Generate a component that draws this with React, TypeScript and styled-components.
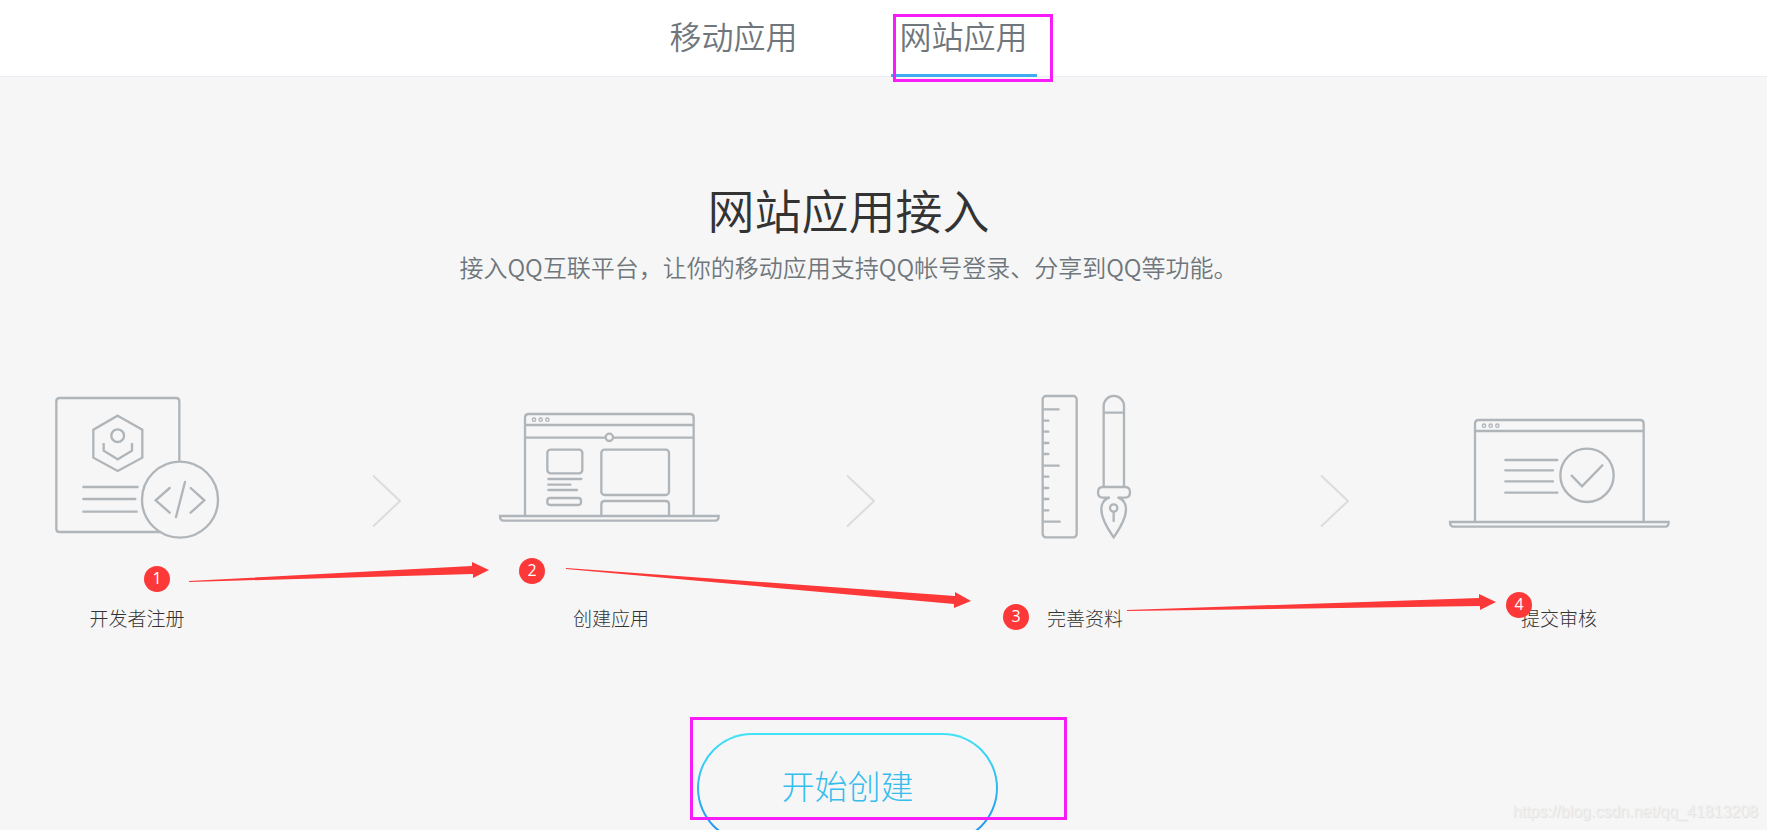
import React from 'react';
import styled, { createGlobalStyle } from 'styled-components';

const GlobalStyle = createGlobalStyle`
  * { box-sizing: border-box; }
  body {
    margin: 0;
    background: #f6f6f6;
    color: #333;
    font-family: "Noto Sans CJK SC", sans-serif;
    font-weight: 300;
  }
`;

const Page = styled.div`
  position: relative;
  height: 100vh;
  overflow: hidden;
`;

const Header = styled.header`
  height: 77px;
  padding-right: 70px;
  background: #fff;
  border-bottom: 1px solid #e8eef3;
`;

const Tabs = styled.nav`
  display: flex;
  justify-content: center;
  gap: 84px;
`;

const Tab = styled.a<{ $active?: boolean }>`
  position: relative;
  width: 146px;
  height: 77px;
  padding-top: 11px;
  border-bottom: 3px solid ${(p) => (p.$active ? '#41aaf0' : 'transparent')};
  color: #6f767c;
  font-size: 32px;
  font-weight: 350;
  line-height: 48px;
  text-align: center;
  text-decoration: none;
`;

const Highlight = styled.span<{ $top: number; $left: number; $width: number; $height: number }>`
  position: absolute;
  top: ${(p) => p.$top}px;
  left: ${(p) => p.$left}px;
  width: ${(p) => p.$width}px;
  height: ${(p) => p.$height}px;
  border: 3px solid #f81cf8;
  pointer-events: none;
`;

const Main = styled.main`
  padding-right: 70px;
`;

const Intro = styled.section`
  padding-top: 97px;
  text-align: center;
`;

const Title = styled.h1`
  margin: 0;
  font-size: 47px;
  font-weight: 350;
  line-height: 70px;
`;

const Subtitle = styled.p`
  margin: 5px 0 0;
  color: #6f767c;
  font-size: 24px;
  font-weight: 350;
  line-height: 36px;
`;

const Steps = styled.ol`
  display: flex;
  justify-content: space-between;
  margin: 109px 0 0;
  padding: 0 26px 0 25px;
  list-style: none;
`;

const Step = styled.li`
  position: relative;
  display: flex;
  flex-direction: column;
  align-items: center;
  gap: 66px;
  width: 224px;
`;

const Separator = styled.li`
  padding-top: 81px;
`;

const StepIcon = styled.svg`
  display: block;
  width: 224px;
  height: 144px;
  overflow: visible;
  fill: none;
  stroke: #b0b5ba;
  stroke-width: 7;
`;

const Chevron = styled.svg`
  display: block;
  fill: none;
  stroke: #dadcde;
  stroke-width: 2;
`;

const StepLabel = styled.span`
  font-size: 19px;
  line-height: 28px;
`;

const Badge = styled.span<{ $top: number; $left: number }>`
  position: absolute;
  top: ${(p) => p.$top}px;
  left: ${(p) => p.$left}px;
  width: 26px;
  height: 26px;
  border-radius: 50%;
  background: #fc3838;
  color: #fff;
  font: 400 16px/24px "Open Sans", sans-serif;
  text-align: center;
`;

const Pointer = styled.svg<{ $top: number; $left: number }>`
  position: absolute;
  top: ${(p) => p.$top}px;
  left: ${(p) => p.$left}px;
  fill: #fc3838;
  pointer-events: none;
`;

const Actions = styled.div`
  display: flex;
  justify-content: center;
  margin-top: 101px;
  padding-right: 2px;
`;

const CreateButton = styled.button`
  position: relative;
  width: 301px;
  height: 110px;
  padding: 0 0 6px;
  border: 2px solid transparent;
  border-radius: 55px;
  background:
    linear-gradient(#f6f6f6, #f6f6f6) padding-box,
    linear-gradient(#3fe4f5, #1f8cf0) border-box;
  color: #35bdee;
  font: inherit;
  font-size: 33px;
  line-height: 48px;
`;

const Watermark = styled.span`
  position: absolute;
  right: 9px;
  bottom: 8px;
  color: #f0f0f0;
  font: 400 16px/20px "Liberation Sans", sans-serif;
  text-shadow: 1px 1px 1px #dedede;
`;

const RegisterIcon = () => (
  <StepIcon viewBox="-45 42 672 432" aria-hidden="true">
    <path d="M418 244V64Q418 54 408 54H59Q49 54 49 64V446Q49 456 59 456H362" />
    <path d="M233 107 307 149V233L233 273 160 233V149Z" />
    <circle cx="233" cy="167" r="19" />
    <path d="M191 189V212L233 238 276 212V189" />
    <path d="M130 321H293M130 357H286M130 395H290" strokeLinecap="round" />
    <circle cx="420" cy="359" r="114" />
    <path d="M389 324 347 361 389 398M452 324 493 361 452 398M435 306 408 411" strokeLinecap="round" />
  </StepIcon>
);

const LaptopFrame = () => (
  <>
    <path d="M525 377V83Q525 72 536 72H1020Q1031 72 1031 83V377M525 105H1031" />
    <g strokeWidth="4">
      <circle cx="552" cy="89" r="5" />
      <circle cx="572" cy="89" r="5" />
      <circle cx="592" cy="89" r="5" />
    </g>
    <path d="M450 378H1106Q1106 392 1096 392H461Q450 392 450 378Z" />
  </>
);

const CreateIcon = () => (
  <StepIcon viewBox="447 12 672 432" aria-hidden="true">
    <LaptopFrame />
    <path d="M525 143H767M789 143H1031" />
    <circle cx="778" cy="142" r="11" />
    <rect x="592" y="179" width="105" height="71" rx="10" />
    <path d="M595 267H694M595 284H661M595 300H681" strokeLinecap="round" />
    <rect x="592" y="324" width="101" height="21" rx="8" />
    <rect x="754" y="179" width="203" height="136" rx="10" />
    <path d="M754 378V343Q754 333 764 333H947Q957 333 957 343V378" />
  </StepIcon>
);

const DetailsIcon = () => (
  <StepIcon viewBox="429 42 672 432" aria-hidden="true">
    <rect x="638" y="48" width="102" height="424" rx="10" />
    <path
      d="M640 88H686M640 122H655M640 155H655M640 189H655M640 222H655M640 257H686M640 290H655M640 324H655M640 357H655M640 391H655M640 425H689"
      strokeLinecap="round"
    />
    <path d="M821 320V78A30.500 30.500 0 0 1 882 78V320M821 98H882" />
    <path d="M837 353H818Q804 353 804 337 804 321 818 321H886Q900 321 900 337 900 353 886 353H865" strokeLinecap="round" />
    <path d="M837 353Q814 362 814 388 814 420 851 472 888 420 888 388 888 362 865 353" />
    <circle cx="851" cy="384" r="11" />
    <path d="M851 396V423" strokeLinecap="round" />
  </StepIcon>
);

const ReviewIcon = () => (
  <StepIcon viewBox="441 -18 672 432" aria-hidden="true">
    <g transform="translate(0 -12)">
      <LaptopFrame />
    </g>
    <path d="M616 180H772M616 211H759M616 244H759M616 278H772" strokeLinecap="round" />
    <circle cx="861" cy="226" r="80" />
    <path d="M815 227 846 259 907 196" strokeLinecap="round" />
  </StepIcon>
);

const Next = () => (
  <Separator aria-hidden="true">
    <Chevron width="54" height="52" viewBox="0 0 54 52">
      <path d="M26 .5 53 26 26 51.500" />
    </Chevron>
  </Separator>
);

export default function App() {
  return (
    <>
      <GlobalStyle />
      <Page>
        <Header>
          <Tabs>
            <Tab href="#mobile">移动应用</Tab>
            <Tab href="#website" $active aria-current="page">
              网站应用
              <Highlight $top={14} $left={2} $width={160} $height={68} />
            </Tab>
          </Tabs>
        </Header>
        <Main>
          <Intro>
            <Title>网站应用接入</Title>
            <Subtitle>接入QQ互联平台，让你的移动应用支持QQ帐号登录、分享到QQ等功能。</Subtitle>
          </Intro>
          <Steps>
            <Step>
              <RegisterIcon />
              <StepLabel>开发者注册</StepLabel>
              <Badge $top={172} $left={119}>1</Badge>
              <Pointer $top={166} $left={164} width="300" height="24" viewBox="0 0 300 24" aria-hidden="true">
                <path d="M0 21 283 6V2L300 10 284 18V14L0 22Z" />
              </Pointer>
            </Step>
            <Next />
            <Step>
              <CreateIcon />
              <StepLabel>创建应用</StepLabel>
              <Badge $top={164} $left={20}>2</Badge>
              <Pointer $top={172} $left={67} width="405" height="44" viewBox="0 0 405 44" aria-hidden="true">
                <path d="M0 2 389 30V26L405 35 388 42V38L0 3Z" />
              </Pointer>
            </Step>
            <Next />
            <Step>
              <DetailsIcon />
              <StepLabel>完善资料</StepLabel>
              <Badge $top={210} $left={30}>3</Badge>
              <Pointer $top={198} $left={154} width="370" height="24" viewBox="0 0 370 24" aria-hidden="true">
                <path d="M0 18 352 6V2L369 10 353 18V14L0 19Z" />
              </Pointer>
            </Step>
            <Next />
            <Step>
              <ReviewIcon />
              <StepLabel>提交审核</StepLabel>
              <Badge $top={198} $left={59}>4</Badge>
            </Step>
          </Steps>
          <Actions>
            <CreateButton type="button">
              开始创建
              <Highlight $top={-18} $left={-9} $width={377} $height={103} />
            </CreateButton>
          </Actions>
        </Main>
        <Watermark>https://blog.csdn.net/qq_41813208</Watermark>
      </Page>
    </>
  );
}
